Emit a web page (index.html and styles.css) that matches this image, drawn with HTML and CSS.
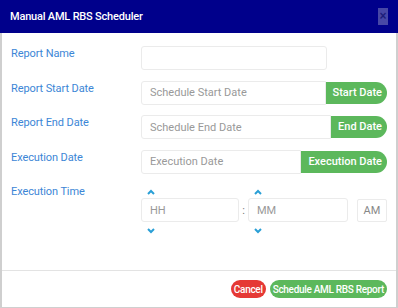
FILE: index.html
```html
<!DOCTYPE html>
<html lang="en">
<head>
  <meta charset="UTF-8" />
  <title>Manual AML RBS Scheduler</title>
  <link rel="stylesheet" href="styles.css">
</head>
<body>
  <div class="modal">
    <div class="modal-header">
      <h4>Manual AML RBS Scheduler</h4>
      <button class="close">&times;</button>
    </div>

    <div class="modal-body">
      <div class="form-row">
        <label>Report Name</label>
        <input type="text" class="field name-field">
      </div>
      <div class="form-row">
        <label>Report Start Date</label>
        <div class="input-group">
          <input type="text" class="field" placeholder="Schedule Start Date">
          <span class="addon">Start Date</span>
        </div>
      </div>
      <div class="form-row">
        <label>Report End Date</label>
        <div class="input-group">
          <input type="text" class="field" placeholder="Schedule End Date">
          <span class="addon">End Date</span>
        </div>
      </div>
      <div class="form-row">
        <label>Execution Date</label>
        <div class="input-group">
          <input type="text" class="field" placeholder="Execution Date">
          <span class="addon">Execution Date</span>
        </div>
      </div>
      <div class="form-row">
        <label>Execution Time</label>
        <div class="timepicker">
          <div class="time-col hours">
            <span class="chevron"><svg width="8" height="6" viewBox="0 0 8 6"><path d="M1 5 L4 2 L7 5" fill="none" stroke="#2a9fd6" stroke-width="2"/></svg></span>
            <input type="text" class="field" placeholder="HH">
            <span class="chevron"><svg width="8" height="6" viewBox="0 0 8 6"><path d="M1 1 L4 4 L7 1" fill="none" stroke="#2a9fd6" stroke-width="2"/></svg></span>
          </div>
          <span class="colon">:</span>
          <div class="time-col minutes">
            <span class="chevron"><svg width="8" height="6" viewBox="0 0 8 6"><path d="M1 5 L4 2 L7 5" fill="none" stroke="#2a9fd6" stroke-width="2"/></svg></span>
            <input type="text" class="field" placeholder="MM">
            <span class="chevron"><svg width="8" height="6" viewBox="0 0 8 6"><path d="M1 1 L4 4 L7 1" fill="none" stroke="#2a9fd6" stroke-width="2"/></svg></span>
          </div>
          <button class="meridian">AM</button>
        </div>
      </div>
    </div>

    <div class="modal-footer">
      <button class="btn btn-cancel">Cancel</button>
      <button class="btn btn-schedule">Schedule AML RBS Report</button>
    </div>
  </div>
</body>
</html>
```

FILE: styles.css
```css
* {
  margin: 0;
  padding: 0;
  box-sizing: border-box;
}
body {
  font-family: 'Roboto', 'Liberation Sans', sans-serif;
  background: #fff;
}
.modal {
  width: 398px;
  height: 308px;
  border-left: 2px solid #cfcfcf;
  border-right: 2px solid #cfcfcf;
  border-bottom: 1px solid #cfcfcf;
  display: flex;
  flex-direction: column;
}
.modal-header {
  background: #00008b;
  height: 33px;
  margin: 0 -2px;
  padding: 0 10px 0 10px;
  display: flex;
  align-items: center;
  justify-content: space-between;
}
.modal-header h4 {
  color: #fff;
  font-size: 11px;
  font-weight: 500;
  letter-spacing: -0.2px;
}
.close {
  width: 10px;
  height: 17px;
  border: none;
  background: #4747a6;
  color: #1c1c7a;
  font-size: 12px;
  line-height: 17px;
  font-family: 'Liberation Sans', sans-serif;
  font-weight: 700;
}
.modal-body {
  flex: 1;
  padding: 13px 9px 0 9px;
  display: flex;
  flex-direction: column;
  gap: 10.5px;
}
.form-row {
  display: grid;
  grid-template-columns: 130px 1fr;
}
.form-row label {
  color: #3c86d6;
  font-size: 11px;
  line-height: 14px;
  margin-top: 1px;
  letter-spacing: -0.1px;
}
.field {
  height: 24px;
  border: 1px solid #ebebeb;
  border-radius: 3px;
  background: #fff;
  padding: 0 8px;
  font-family: 'Roboto', 'Liberation Sans', sans-serif;
  font-size: 11px;
  color: #555;
  outline: none;
}
.field::placeholder {
  color: #999;
}
.name-field {
  width: 186px;
}
.input-group {
  display: flex;
  align-items: center;
}
.input-group .field {
  flex: 1;
  min-width: 0;
  border-radius: 3px 0 0 3px;
}
.addon {
  background: #5cb85c;
  color: #fff;
  font-size: 11px;
  font-weight: 500;
  height: 22px;
  line-height: 22px;
  padding: 0 5px 0 7px;
  border-radius: 0 11px 11px 0;
  white-space: nowrap;
}
.timepicker {
  display: flex;
  align-items: center;
}
.time-col {
  display: flex;
  flex-direction: column;
}
.time-col .field {
  width: 100%;
}
.hours {
  width: 98px;
}
.minutes {
  width: 100px;
}
.chevron {
  height: 14px;
  padding-left: 6px;
  display: flex;
  align-items: center;
}
.chevron:first-child {
  padding-top: 2px;
}
.chevron:last-child {
  padding-top: 3px;
}
.colon {
  width: 9px;
  text-align: center;
  color: #777;
  font-size: 11px;
}
.meridian {
  width: 30px;
  height: 23px;
  margin-left: 9px;
  border: 1px solid #ebebeb;
  border-radius: 2px;
  background: #fff;
  color: #888;
  font-family: 'Roboto', 'Liberation Sans', sans-serif;
  font-size: 11px;
}
.modal-footer {
  border-top: 1px solid #e3e3e3;
  height: 37px;
  padding: 0 9px 0 0;
  display: flex;
  align-items: center;
  justify-content: flex-end;
  gap: 4px;
}
.btn {
  border: none;
  color: #fff;
  font-family: 'Roboto', 'Liberation Sans', sans-serif;
  font-size: 10px;
  font-weight: 500;
  letter-spacing: -0.3px;
  height: 18px;
  padding: 0 3px;
  border-radius: 9px;
}
.btn-cancel {
  background: #e53935;
}
.btn-schedule {
  background: #5cb85c;
}
```
